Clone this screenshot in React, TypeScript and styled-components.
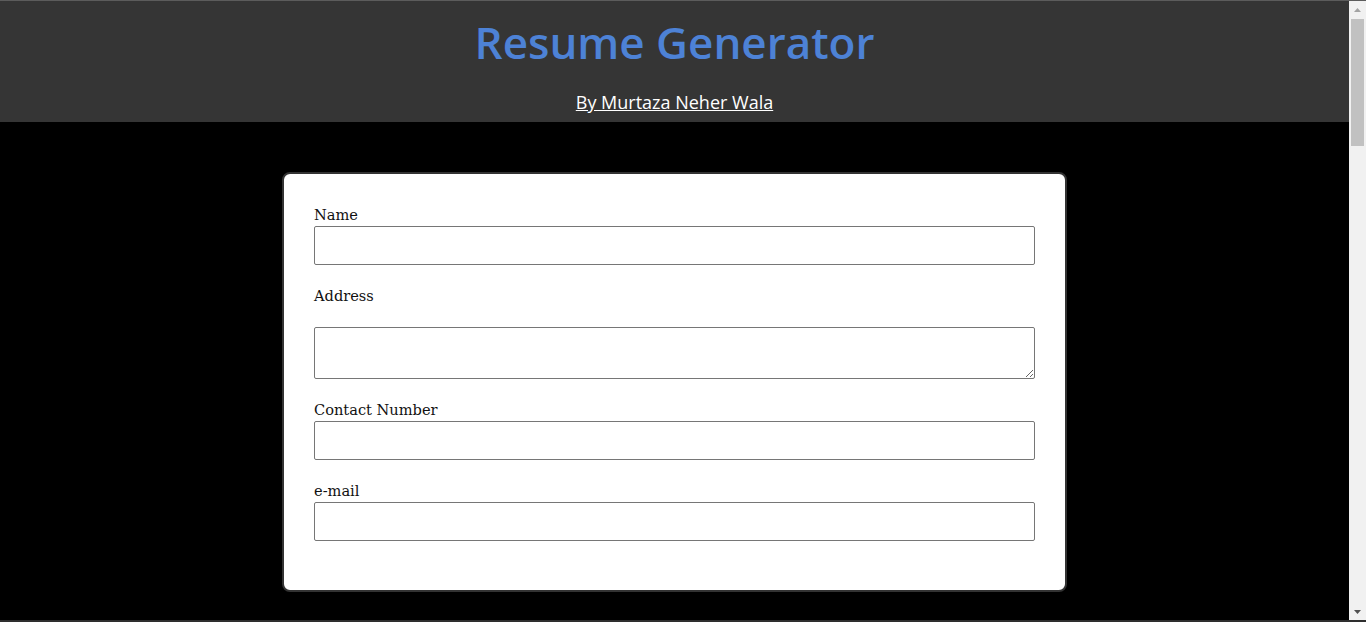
import React from "react";
import styled, { createGlobalStyle } from "styled-components";

const Global = createGlobalStyle`
  html, body { margin: 0; padding: 0; background: #000; overflow: hidden; }
  * { box-sizing: border-box; }
`;

const Frame = styled.div`
  height: 100vh;
  display: flex;
  border-top: 1px solid #5c5c5c;
  border-bottom: 2px solid #2e2e2e;
  background: #000;
`;

const Pane = styled.div`
  flex: 1;
  overflow-y: auto;
  scrollbar-width: none;
  &::-webkit-scrollbar { display: none; }
`;

const Scrollbar = styled.div`
  width: 17px;
  flex: none;
  background: #f1f1f1;
  display: flex;
  flex-direction: column;
`;

const ArrowButton = styled.div`
  height: 17px;
  flex: none;
  display: flex;
  align-items: center;
  justify-content: center;
`;

const Track = styled.div`
  flex: 1;
  padding: 1px 2px 0;
`;

const Thumb = styled.div`
  height: 127px;
  background: #c1c1c1;
`;

const Header = styled.header`
  background: #353535;
  height: 121px;
  display: flex;
  flex-direction: column;
  align-items: center;
`;

const Title = styled.h1`
  margin: 13px 0 0;
  font-family: "Open Sans", "Noto Sans", sans-serif;
  font-weight: 600;
  font-size: 44px;
  line-height: 56px;
  color: #4d82d6;
`;

const Byline = styled.a`
  margin-top: 20px;
  font-family: "Open Sans", "Noto Sans", sans-serif;
  font-size: 18px;
  line-height: 24px;
  color: #fff;
  text-decoration: underline;
`;

const Main = styled.main`
  padding: 50px 0 50px;
  display: flex;
  flex-direction: column;
  align-items: center;
`;

const Card = styled.form`
  width: 785px;
  flex: none;
  background: #fff;
  border: 2px solid #333;
  border-radius: 8px;
  padding: 30px 30px 29px;
`;

const Label = styled.label<{ $gap?: boolean }>`
  display: block;
  font-family: "DejaVu Serif", "Liberation Serif", serif;
  font-size: 14.6px;
  line-height: 22px;
  color: #111;
  margin-bottom: ${(p) => (p.$gap ? "20px" : "0")};
`;

const Input = styled.input`
  display: block;
  width: 100%;
  height: 39px;
  margin: 0 0 20px;
  border: 1px solid #767676;
  border-radius: 2px;
  background: #fff;
`;

const Area = styled.textarea`
  display: block;
  width: 100%;
  height: 52px;
  margin: 0 0 20px;
  border: 1px solid #767676;
  border-radius: 2px;
  background: #fff;
`;

const Arrow = ({ up, color }: { up?: boolean; color: string }) => (
  <svg width="7" height="4" viewBox="0 0 7 4">
    <polygon points={up ? "3.5,0 7,4 0,4" : "0,0 7,0 3.5,4"} fill={color} />
  </svg>
);

export default function App() {
  return (
    <>
      <Global />
      <Frame>
        <Pane>
          <Header>
            <Title>Resume Generator</Title>
            <Byline href="#">By Murtaza Neher Wala</Byline>
          </Header>
          <Main>
            <Card>
              <Label>Name</Label>
              <Input type="text" />
              <Label $gap>Address</Label>
              <Area />
              <Label>Contact Number</Label>
              <Input type="text" />
              <Label>e-mail</Label>
              <Input type="email" />
            </Card>
          </Main>
        </Pane>
        <Scrollbar>
          <ArrowButton>
            <Arrow up color="#a3a3a3" />
          </ArrowButton>
          <Track>
            <Thumb />
          </Track>
          <ArrowButton>
            <Arrow color="#505050" />
          </ArrowButton>
        </Scrollbar>
      </Frame>
    </>
  );
}
